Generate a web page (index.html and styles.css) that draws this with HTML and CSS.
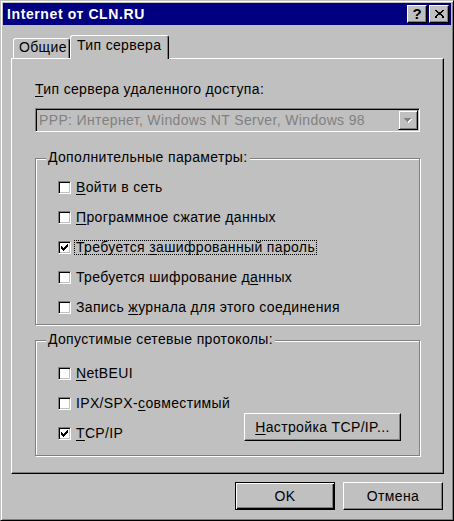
FILE: index.html
```html
<!DOCTYPE html>
<html>
<head>
<meta charset="utf-8">
<title>Internet от CLN.RU</title>
<link rel="stylesheet" href="styles.css">
</head>
<body>
<div class="window">
  <div class="titlebar">
    <span class="title">Internet от CLN.RU</span>
    <div class="tbtns">
      <span class="tbtn help">?</span>
      <span class="tbtn close"><svg width="9" height="8" viewBox="0 0 9 8" shape-rendering="crispEdges"><path fill="#000" d="M0 0h2v1h-2zM7 0h2v1h-2zM1 1h2v1h-2zM6 1h2v1h-2zM2 2h5v1h-5zM3 3h3v1h-3zM2 4h5v1h-5zM1 5h2v1h-2zM6 5h2v1h-2zM0 6h2v1h-2zM7 6h2v1h-2zM0 7h2v1h-2zM7 7h2v1h-2z"/></svg></span>
    </div>
  </div>

  <div class="tabs">
    <div class="tab">Общие</div>
    <div class="tab active">Тип сервера</div>
  </div>

  <div class="panel">
    <div class="label"><u>Т</u>ип сервера удаленного доступа:</div>
    <div class="combo">
      <span class="combo-text">PPP: Интернет, Windows NT Server, Windows 98</span>
      <span class="combo-btn"><svg width="8" height="5" viewBox="0 0 8 5" shape-rendering="crispEdges"><path fill="#fff" d="M1 1h7v1h-7zM2 2h5v1h-5zM3 3h3v1h-3zM4 4h1v1h-1z"/><path fill="#808080" d="M0 0h7v1h-7zM1 1h5v1h-5zM2 2h3v1h-3zM3 3h1v1h-1z"/></svg></span>
    </div>

    <div class="group g1">
      <div class="legend">Дополнительные параметры:</div>
      <div class="rows">
        <div class="row"><span class="cb"></span><span class="cl"><u>В</u>ойти в сеть</span></div>
        <div class="row"><span class="cb"></span><span class="cl"><u>П</u>рограммное сжатие данных</span></div>
        <div class="row"><span class="cb"><svg class="tick" width="7" height="7" viewBox="0 0 7 7" shape-rendering="crispEdges"><path fill="#000" d="M6 0h1v1h-1zM5 1h2v1h-2zM0 2h1v1h-1zM4 2h3v1h-3zM0 3h2v1h-2zM3 3h3v1h-3zM0 4h5v1h-5zM1 5h3v1h-3zM2 6h1v1h-1z"/></svg></span><span class="cl focus">Требуется <u>з</u>ашифрованный пароль</span></div>
        <div class="row"><span class="cb"></span><span class="cl">Требуется шифрование д<u>а</u>нных</span></div>
        <div class="row"><span class="cb"></span><span class="cl">Запись <u>ж</u>урнала для этого соединения</span></div>
      </div>
    </div>

    <div class="group g2">
      <div class="legend">Допустимые сетевые протоколы:</div>
      <div class="g2body">
        <div class="rows">
          <div class="row"><span class="cb"></span><span class="cl"><u>N</u>etBEUI</span></div>
          <div class="row"><span class="cb"></span><span class="cl">IPX/SPX-<u>с</u>овместимый</span></div>
          <div class="row"><span class="cb"><svg class="tick" width="7" height="7" viewBox="0 0 7 7" shape-rendering="crispEdges"><path fill="#000" d="M6 0h1v1h-1zM5 1h2v1h-2zM0 2h1v1h-1zM4 2h3v1h-3zM0 3h2v1h-2zM3 3h3v1h-3zM0 4h5v1h-5zM1 5h3v1h-3zM2 6h1v1h-1z"/></svg></span><span class="cl"><u>T</u>CP/IP</span></div>
        </div>
        <div class="btn tcp"><span><u>Н</u>астройка TCP/IP...</span></div>
      </div>
    </div>
  </div>

  <div class="footer">
    <div class="btn default"><span>OK</span></div>
    <div class="btn"><span>Отмена</span></div>
  </div>
</div>
</body>
</html>
```

FILE: styles.css
```css
html, body {
  margin: 0;
  padding: 0;
}

body {
  background: #c0c0c0;
  font-family: "Liberation Sans", Arial, sans-serif;
  font-size: 14px;
  letter-spacing: 0.35px;
  color: #000;
}

u {
  text-decoration: underline;
  text-underline-offset: 2px;
}

.window {
  width: 454px;
  height: 521px;
  box-sizing: border-box;
  border: 1px solid;
  border-color: #c0c0c0 #000 #000 #c0c0c0;
  box-shadow: inset 1px 1px 0 #fff, inset -1px -1px 0 #808080;
  padding: 2px;
  display: flex;
  flex-direction: column;
  background: #c0c0c0;
}

/* title bar */
.titlebar {
  height: 22px;
  background: #000080;
  display: flex;
  align-items: center;
  justify-content: space-between;
  padding: 0 2px 0 4px;
}

.title {
  color: #fff;
  font-weight: bold;
  font-size: 14px;
  letter-spacing: 0.6px;
  line-height: 16px;
}

.tbtns {
  display: flex;
  gap: 2px;
}

.tbtn {
  width: 20px;
  height: 18px;
  box-sizing: border-box;
  background: #c0c0c0;
  border: 1px solid;
  border-color: #fff #000 #000 #fff;
  box-shadow: inset -1px -1px 0 #808080;
  display: flex;
  align-items: center;
  justify-content: center;
}

.tbtn.help {
  font-weight: bold;
  font-size: 15px;
  letter-spacing: 0;
  line-height: 16px;
}

/* tabs */
.tabs {
  display: flex;
  align-items: flex-end;
  margin: 10px 0 0 8px;
  padding-left: 2px;
}

.tab {
  box-sizing: border-box;
  width: 57px;
  height: 20px;
  border: 1px solid;
  border-bottom: none;
  border-color: #fff #000 #000 #fff;
  border-radius: 3px 3px 0 0;
  box-shadow: inset -1px 0 0 #808080;
  padding: 1px 0 0 5px;
  line-height: 15px;
  white-space: nowrap;
  background: #c0c0c0;
}

.tab.active {
  width: 99px;
  height: 24px;
  margin-bottom: -1px;
  position: relative;
  z-index: 1;
  padding: 2px 0 0 6px;
}

/* panel */
.panel {
  height: 416px;
  box-sizing: border-box;
  margin: 0 7px 0 8px;
  border: 1px solid;
  border-color: #fff #000 #000 #fff;
  box-shadow: inset -1px -1px 0 #808080;
  padding: 23px 23px 0 23px;
  display: flex;
  flex-direction: column;
}

.label {
  line-height: 15px;
}

.combo {
  margin-top: 11px;
  height: 24px;
  box-sizing: border-box;
  border: 1px solid;
  border-color: #808080 #fff #fff #808080;
  box-shadow: inset 1px 1px 0 #000, inset -1px -1px 0 #c0c0c0;
  padding: 1px 1px 1px 3px;
  display: flex;
  align-items: stretch;
}

.combo-text {
  flex: 1;
  color: #808080;
  line-height: 20px;
  white-space: nowrap;
  overflow: hidden;
}

.combo-btn {
  width: 20px;
  box-sizing: border-box;
  border: 1px solid;
  border-color: #c0c0c0 #000 #000 #c0c0c0;
  box-shadow: inset 1px 1px 0 #fff, inset -1px -1px 0 #808080;
  display: flex;
  align-items: center;
  justify-content: center;
}

/* group boxes */
.group {
  border: 1px solid #808080;
  box-shadow: 1px 1px 0 #fff, inset 1px 1px 0 #fff;
  display: flex;
  flex-direction: column;
}

.g1 {
  margin-top: 26px;
  padding: 0 0 9px 22px;
}

.g2 {
  margin-top: 15px;
  padding: 0 0 14px 22px;
}

.legend {
  align-self: flex-start;
  margin: -9px 0 0 -12px;
  padding: 0 2px;
  line-height: 15px;
  background: #c0c0c0;
}

.rows {
  display: flex;
  flex-direction: column;
  gap: 15px;
}

.g1 .rows {
  margin-top: 15px;
}

.g2 .rows {
  margin-top: 19px;
}

.row {
  display: flex;
  align-items: flex-start;
  height: 15px;
}

.cb {
  width: 13px;
  height: 13px;
  margin-top: 1px;
  box-sizing: border-box;
  background: #fff;
  border: 1px solid;
  border-color: #808080 #fff #fff #808080;
  box-shadow: inset 1px 1px 0 #000, inset -1px -1px 0 #c0c0c0;
  display: flex;
  align-items: center;
  justify-content: center;
}

.cl {
  margin-left: 3px;
  border: 1px dotted transparent;
  padding: 0 1px;
  line-height: 13px;
  white-space: nowrap;
}

.cl.focus {
  border-color: #000;
}

.g2body {
  display: flex;
  justify-content: space-between;
  align-items: flex-end;
  padding-right: 18px;
}

/* buttons */
.btn {
  box-sizing: border-box;
  height: 28px;
  background: #c0c0c0;
  border: 1px solid;
  border-color: #fff #000 #000 #fff;
  box-shadow: inset -1px -1px 0 #808080;
  display: flex;
  align-items: center;
  justify-content: center;
  line-height: 16px;
}

.btn.tcp {
  width: 157px;
}

.footer {
  display: flex;
  justify-content: flex-end;
  gap: 8px;
  margin: 8px 8px 0 0;
}

.footer .btn {
  width: 100px;
}

.btn.default {
  border-color: #000;
  box-shadow: inset 1px 1px 0 #fff, inset -1px -1px 0 #000, inset -2px -2px 0 #808080;
}
```
